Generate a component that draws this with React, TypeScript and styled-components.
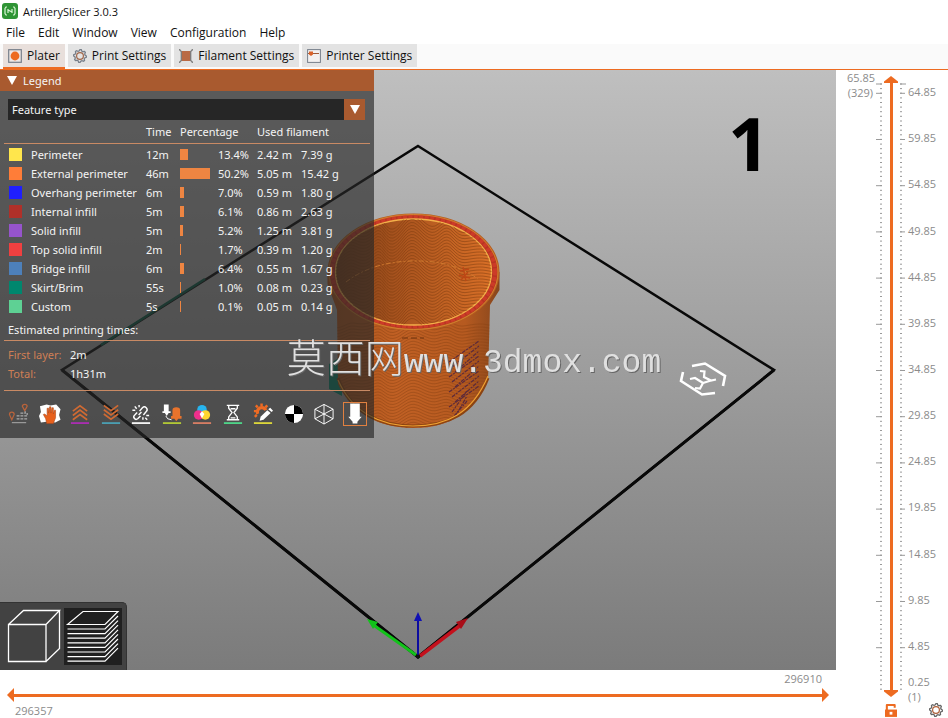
import React, { useState } from "react";
import styled, { createGlobalStyle, css } from "styled-components";

const ORANGE = "#ed6b21";
const PANEL_ORANGE = "#a95a2f";
const UI_FONT = `"Open Sans", "Noto Sans", sans-serif`;
const PANEL_FONT = `"Noto Sans", "Open Sans", sans-serif`;

const GlobalStyle = createGlobalStyle`
  * { box-sizing: border-box; }
  body { margin: 0; background: #fff; font-family: ${UI_FONT}; font-size: 12px; color: #111; }
  button, input, select { font: inherit; color: inherit; margin: 0; }
  button { border: 0; padding: 0; background: none; cursor: pointer; }
  svg { display: block; }
`;

const Window = styled.div`
  min-height: 100vh;
  display: grid;
  grid-template-rows: 22px 22px 26px 1fr;
`;

const TitleBar = styled.header`
  display: flex;
  align-items: center;
  gap: 5px;
  padding-left: 2px;
  font-size: 11px;
`;

const MenuBar = styled.nav`
  display: flex;
  align-items: center;
  gap: 13px;
  padding-left: 6px;
`;

const MenuItem = styled.button`
  line-height: 20px;
`;

const TabStrip = styled.div`
  display: flex;
  gap: 3px;
  padding-left: 3px;
  background: #fafafa;
  border-bottom: 1px solid ${ORANGE};
`;

const Tab = styled.button<{ $active: boolean }>`
  display: flex;
  align-items: center;
  gap: 5px;
  padding: 0 5px;
  background: ${(p) => (p.$active ? "#e8dfdb" : "#e3e3e3")};
  border-bottom: 2px solid ${(p) => (p.$active ? ORANGE : "#fafafa")};
`;

const Workspace = styled.main`
  display: grid;
  grid-template-columns: 1fr 112px;
`;

const Stage = styled.section`
  display: grid;
  grid-template-rows: 1fr 48px;
`;

const Viewport = styled.div`
  display: grid;
  overflow: hidden;
  background: linear-gradient(#bfbfbf, #7b7b7b);
  > * { grid-area: 1 / 1; }
`;

const Scene = styled.svg`
  width: 100%;
  height: 100%;
  min-height: 0;
  contain: size;
`;

const LegendPanel = styled.aside`
  place-self: start;
  width: 374px;
  z-index: 1;
  padding-bottom: 12px;
  background: rgba(40, 40, 40, 0.66);
  color: #f4f4f4;
  font-family: ${PANEL_FONT};
  font-size: 11px;
`;

const LegendTitle = styled.button`
  display: flex;
  align-items: center;
  gap: 6px;
  width: 100%;
  height: 21px;
  padding-left: 7px;
  background: ${PANEL_ORANGE};
`;

const Combo = styled.label`
  display: grid;
  grid-template-columns: 1fr 21px;
  height: 21px;
  margin: 8px 9px 1px 8px;
`;

const ComboSelect = styled.select`
  grid-area: 1 / 1 / 2 / 3;
  appearance: none;
  border: 0;
  border-radius: 0;
  padding: 0 4px;
  background: #262626;
`;

const ComboArrow = styled.span`
  grid-area: 1 / 2;
  display: grid;
  place-items: center;
  background: ${PANEL_ORANGE};
  pointer-events: none;
`;

const FeatureTable = styled.table`
  width: 366px;
  margin: 0 4px;
  table-layout: fixed;
  border-collapse: collapse;
  tbody::before { content: ""; display: table-row; height: 2px; }
  th, td { padding: 0; text-align: left; font-weight: 400; white-space: nowrap; }
  td { height: 19px; line-height: 18px; }
  thead th { height: 22px; border-bottom: 1px solid #c98a64; }
`;

const Col = styled.col<{ $w?: number }>`
  ${(p) => p.$w && css`width: ${p.$w}px;`}
`;

const Swatch = styled.span<{ $color: string }>`
  display: block;
  width: 13px;
  height: 13px;
  margin-left: 5px;
  background: ${(p) => p.$color};
`;

const Bar = styled.span`
  display: block;
  height: 11px;
  background: #ee8542;
`;

const SectionTitle = styled.h2`
  margin: 4px 4px 0;
  padding-left: 4px;
  height: 21px;
  line-height: 19px;
  font-size: 11px;
  font-weight: 400;
  border-bottom: 1px solid #c98a64;
`;

const Times = styled.dl`
  display: grid;
  grid-template-columns: 62px 1fr;
  grid-auto-rows: 19px;
  line-height: 19px;
  margin: 0 4px;
  padding: 4px 0 7px 4px;
  border-bottom: 1px solid #c98a64;
  dt { color: #cf7f55; }
  dd { margin: 0; }
`;

const ToolRow = styled.div`
  display: flex;
  justify-content: space-between;
  padding: 11px 7px 0 7px;
`;

const Tool = styled.button<{ $framed?: boolean }>`
  width: 24px;
  height: 24px;
  display: grid;
  place-items: center;
  border: ${(p) => (p.$framed ? "1px solid #e08040" : "0")};
`;

const ViewSwitch = styled.div`
  place-self: end start;
  z-index: 1;
  display: flex;
  gap: 1px;
  padding: 5px 4px 5px 5px;
  background: #424242;
  border-top: 1px solid #333;
  border-right: 1px solid #333;
  border-radius: 0 5px 0 0;
`;

const ViewButton = styled.button<{ $active: boolean }>`
  width: 58px;
  height: 57px;
  background: ${(p) => (p.$active ? "#202020" : "transparent")};
`;

const MoveBar = styled.div`
  display: grid;
  grid-template-rows: 18px 14px 16px;
  padding: 0 7px;
  color: #8b8b8b;
  font-size: 11px;
  line-height: 18px;
`;

const MoveEnd = styled.output`
  justify-self: end;
  padding-right: 7px;
`;

const MoveStart = styled.output`
  padding-left: 8px;
`;

const DoubleSlider = styled.div<{ $vertical?: boolean }>`
  display: grid;
  background: ${(p) =>
    p.$vertical
      ? `linear-gradient(${ORANGE}, ${ORANGE}) center / 3px calc(100% - 12px) no-repeat`
      : `linear-gradient(${ORANGE}, ${ORANGE}) center / calc(100% - 12px) 3px no-repeat`};
`;

const shapes = {
  left: "polygon(0 50%, 100% 0, 100% 100%)",
  right: "polygon(100% 50%, 0 0, 0 100%)",
  up: "polygon(50% 0, 100% 80%, 100% 100%, 0 100%, 0 80%)",
  down: "polygon(50% 100%, 100% 20%, 100% 0, 0 0, 0 20%)",
};

const Range = styled.input<{ $shape: keyof typeof shapes }>`
  grid-area: 1 / 1;
  appearance: none;
  background: transparent;
  width: 100%;
  height: 100%;
  min-width: 0;
  min-height: 0;
  pointer-events: none;
  ${(p) =>
    (p.$shape === "up" || p.$shape === "down") &&
    css`
      writing-mode: vertical-lr;
      direction: rtl;
    `}
  &::-webkit-slider-thumb {
    appearance: none;
    pointer-events: auto;
    width: ${(p) => (p.$shape === "up" || p.$shape === "down" ? 14 : 7)}px;
    height: ${(p) => (p.$shape === "up" || p.$shape === "down" ? 7 : 14)}px;
    background: ${ORANGE};
    clip-path: ${(p) => shapes[p.$shape]};
  }
`;

const LayerBar = styled.section`
  display: grid;
  grid-template-columns: 29px 30px 1fr;
  grid-template-rows: 1fr 48px;
  padding-left: 11px;
  color: #8b8b8b;
  font-size: 11px;
  line-height: 15px;
`;

const TopLayer = styled.output`
  grid-area: 1 / 1;
  text-align: right;
  padding-right: 3px;
`;

const LayerTrack = styled.div`
  grid-area: 1 / 2 / 3 / 3;
  display: grid;
  margin: 6px 0 21px;
  > * { grid-area: 1 / 1; }
`;

const Ticks = styled.svg`
  width: 30px;
  height: 100%;
  contain: size;
`;

const LayerLabels = styled.ol`
  grid-area: 1 / 3;
  display: flex;
  flex-direction: column;
  margin: 0;
  padding: 0 0 0 2px;
  list-style: none;
  li { flex: 1; display: flex; align-items: center; padding-bottom: 3px; }
`;

const BottomLayer = styled.output`
  grid-area: 2 / 3;
  padding: 4px 0 0 2px;
`;

const LockButton = styled.button`
  grid-area: 2 / 2;
  place-self: end center;
  z-index: 1;
  padding-bottom: 1px;
`;

const SettingsButton = styled.button`
  grid-area: 2 / 3;
  place-self: end end;
  padding: 0 5px 1px 0;
`;

const Watermark = styled.div`
  position: fixed;
  inset: 0;
  z-index: 5;
  display: grid;
  place-content: center;
  pointer-events: none;
  color: #e0e0e0;
  text-shadow: 1px 1px 0 #666;
  white-space: nowrap;
  font: 33px/44px "Liberation Mono", monospace;
`;

const WatermarkHan = styled.span`
  font: 300 39px/44px "Noto Sans CJK SC", sans-serif;
`;

/* ---------- icons ---------- */

const AppIcon = () => (
  <svg width="16" height="16" viewBox="0 0 16 16">
    <rect width="16" height="16" rx="3" fill="#2f9435" />
    <path d="M5 4H4L3 5.500V10.500L4 12H5M11 4H12L13 5.500V10.500L12 12H11M6 6V10M10 6V10M6 7L10 9" fill="none" stroke="#d8f5d4" strokeWidth="1.200" />
  </svg>
);

const PlaterIcon = () => (
  <svg width="14" height="14" viewBox="0 0 14 14">
    <rect x=".7" y=".7" width="12.600" height="12.600" fill="#eee7e4" stroke="#777f8a" strokeWidth="1.200" />
    <circle cx="7" cy="7" r="4.400" fill={ORANGE} />
  </svg>
);

const gearPath = (cx: number, cy: number, r: number) => {
  const pts: string[] = [];
  for (let i = 0; i < 32; i++) {
    const rr = i % 4 < 2 ? r : r - 1.3;
    const a = (i / 32) * Math.PI * 2;
    pts.push(`${(cx + rr * Math.cos(a)).toFixed(2)},${(cy + rr * Math.sin(a)).toFixed(2)}`);
  }
  return `M${pts.join("L")}Z`;
};

const GearIcon = ({ stroke, inner }: { stroke: string; inner: string }) => (
  <svg width="14" height="14" viewBox="0 0 14 14" fill="none">
    <path d={gearPath(7, 7, 6.4)} stroke={stroke} strokeWidth="1.300" />
    <circle cx="7" cy="7" r="3.400" stroke={inner} strokeWidth="1.200" />
  </svg>
);

const SpoolIcon = () => (
  <svg width="14" height="14" viewBox="0 0 14 14">
    <path d="M2 2H12V12H2Z" fill="#b96a45" />
    <path d="M.7 0V1L2.300 2.500V11.500L.7 13V14M13.300 0V1L11.700 2.500V11.500L13.300 13V14" fill="none" stroke="#7d7d7d" strokeWidth="1.300" />
  </svg>
);

const PrinterIcon = () => (
  <svg width="14" height="14" viewBox="0 0 14 14">
    <rect x=".6" y=".6" width="12.800" height="12.800" fill="#f3f1f0" stroke="#777f8a" />
    <path d="M1 4.500H12" stroke="#a05a38" />
    <path d="M2 2.500H6V5.500L4 7L2 5.500Z" fill="#d9622a" />
  </svg>
);

const Triangle = () => (
  <svg width="10" height="9" viewBox="0 0 10 9">
    <path d="M0 0H10L5 9Z" fill="#fff" />
  </svg>
);

const LockIcon = () => (
  <svg width="12" height="14" viewBox="0 0 13 15">
    <path d="M2 8V2H10.500V5" fill="none" stroke={ORANGE} strokeWidth="2.200" strokeLinejoin="round" />
    <path d="M0 7H13V15H0Z" fill={ORANGE} />
    <path d="M5 9.500H8V12.500H5Z" fill="#fff" />
  </svg>
);

const CubeIcon = () => (
  <svg width="58" height="57" viewBox="5 608 58 57" fill="none" stroke="#fff" strokeWidth="1.300">
    <path d="M8.500 624.500H46V661.500H8.500ZM8.500 624.500L23.500 610.500H59.500L46 624.500M59.500 610.500V648.500L46 661.500" />
  </svg>
);

const LayersIcon = () => (
  <svg width="58" height="57" viewBox="64 608 58 57" fill="none" stroke="#fff" strokeWidth="1.200">
    <path d="M67.500 624.500L83 611.500H118L105 624.500Z" />
    {[0, 1, 2, 3, 4, 5, 6, 7].map((i) => (
      <path key={i} d={`M67.500 ${629 + i * 4.6}H105L118 ${616 + i * 4.6}`} />
    ))}
  </svg>
);

const O = "#cf6a33";
const toolArt: Record<string, React.ReactNode> = {
  Travel: (
    <g fill="none" stroke="#b8633b" strokeWidth="1.300">
      <path d="M1.500 11.500Q1.500 9 4 9T6.500 11.500L4 17Z" />
      <path d="M15 3Q15 1 17.500 1T20 3L17.500 7.500Z" />
      <path d="M18 8V10H12M9 13H20V10M9 16H20" stroke="#aaa" strokeDasharray="3 1" />
      <path d="M4 20H19" stroke="#999" />
    </g>
  ),
  Wipe: (
    <g>
      <path d="M1 3L8 1L12 2L18 1L22.500 6L21 12L22.500 17L17 20L8 19L2 20L0 13L2 9Z" fill="#fff" />
      <path d="M8 21L7 16L4.500 11.500L6 11L8.500 13V5H10V10L11 3.500H12.500V10L13.500 4.500H15V11L16 7H17.300V15L15 21Z" fill="#e8601c" stroke="#a8481c" strokeWidth=".6" />
    </g>
  ),
  Retractions: (
    <g fill="none" strokeWidth="1.800">
      <path d="M4 8L11.500 2.500L19 8M4 12.500L11.500 7L19 12.500M4 17L11.500 11.500L19 17" stroke={O} />
      <path d="M2 20.500H21" stroke="#b02cb8" />
    </g>
  ),
  Deretractions: (
    <g fill="none" strokeWidth="1.800">
      <path d="M4 2L11.500 7.500L19 2M4 6.500L11.500 12L19 6.500M4 11L11.500 16.500L19 11" stroke={O} />
      <path d="M2 20.500H21" stroke="#4ba3b8" />
    </g>
  ),
  Seams: (
    <g fill="none" stroke="#fff" strokeWidth="1.500">
      <path d="M10 8L13 4.500Q15 2.500 17 4.500T17 8.500L14 12M12 9L9 12M11 13L8 16Q6 17.500 4.500 15.500T5 12L7.500 9.500M5 3L7 5.500M9.500 1.500V4M2.500 7H5.500M18 17L16 15M13.500 17V14.500M20 12.500H17" />
      <path d="M2 20.500H21" strokeWidth="1.800" />
    </g>
  ),
  "Tool changes": (
    <g>
      <path d="M3 1H8V8H10V10H8L6 13L4 10H1.500V8H3Z" fill="#fff" />
      <path d="M12 7Q12 4 16 4T20 7V13H21.500V16H18L16 18.500L14 16H10.500V13H12Z" fill="#e8732c" />
      <path d="M5 13Q6 17 11 17" fill="none" stroke="#fff" />
      <path d="M2 20.500H21" stroke="#b8cf35" strokeWidth="1.800" />
    </g>
  ),
  "Color changes": (
    <g>
      <circle cx="11.500" cy="6.500" r="5" fill="#27b4ee" />
      <circle cx="8" cy="12" r="5" fill="#ee2f8c" />
      <circle cx="15" cy="12" r="5" fill="#ffd52e" />
      <path d="M11.500 8L14 11L11.500 15.500L9 11Z" fill="#fff" />
      <path d="M2 20.500H21" stroke="#df8066" strokeWidth="1.800" />
    </g>
  ),
  "Print pauses": (
    <g fill="none" stroke="#fff" strokeWidth="1.400">
      <path d="M5 2H18M5 17H18M7 2V5L10.500 9.500L7 14V17M16 2V5L12.500 9.500L16 14V17M9 5.500H14M9 15H14" />
      <path d="M2 20.500H21" stroke="#4fdd8c" strokeWidth="1.800" />
    </g>
  ),
  "Custom G-codes": (
    <g>
      <path d="M14.500 7A4.500 4.500 0 1 0 6 11" fill="none" stroke="#ee6b24" strokeWidth="3.400" />
      <path d="M4 2L6 4M10 0V3M2 8H5M16 2L14 4M3 14L5 12" stroke="#ee6b24" strokeWidth="2.600" />
      <path d="M8 18L9 14L16 7L19.500 10L12 17Z" fill="#fff" />
      <path d="M17 6L19 4.500L22 7.500L20.500 9Z" fill="#fff" />
      <path d="M2 20.500H21" stroke="#e5df3a" strokeWidth="1.800" />
    </g>
  ),
  "Center of gravity": (
    <g>
      <circle cx="11.500" cy="11" r="9.500" fill="#fff" />
      <path d="M11.500 11V1.500A9.500 9.500 0 0 0 2 11ZM11.500 11V20.500A9.500 9.500 0 0 0 21 11Z" fill="#000" transform="matrix(-1 0 0 1 23 0)" />
    </g>
  ),
  Shells: (
    <path d="M11.500 1L21 6V16L11.500 21.500L2 16V6ZM2 6L11.500 11L21 6M11.500 11V21.500M2 16L11.500 11L21 16M11.500 1V11" fill="none" stroke="#fff" />
  ),
  "Tool marker": <path d="M6.500 0H16.500V14H18.500L14 19V21H9V19L4.500 14H6.500Z" fill="#fff" />,
};

/* ---------- 3D scene ---------- */

const grain = (top: number, count: number, step: number, amp: number) =>
  Array.from({ length: count }, (_, k) => {
    const pts: string[] = [];
    for (let x = 324; x <= 502; x += 3) {
      const bump = (c: number, w: number, h: number) => h * Math.exp(-Math.pow((x - c) / w, 2));
      const y =
        top + k * step - bump(411, 13, amp) - bump(379, 8, amp * 0.7) - bump(447, 10, amp * 0.8) -
        bump(350, 8, amp * 0.4) + 2 * Math.sin((x - 324) / 9);
      pts.push(`${x},${y.toFixed(1)}`);
    }
    return `M${pts.join("L")}`;
  }).join("");

const BODY = "M327.500 272V284L337 310L338 384C352 414 380 428 413 428S472 416 488 380L490 305L499.500 290V272Z";

const PrintScene = () => (
  <Scene viewBox="0 70 836 600" preserveAspectRatio="xMidYMid slice" role="img" aria-label="Sliced cup on print bed">
    <defs>
      <linearGradient id="outer">
        <stop offset="0" stopColor="#a9521c" />
        <stop offset=".4" stopColor="#c06024" />
        <stop offset=".8" stopColor="#b65a20" />
        <stop offset="1" stopColor="#87461c" />
      </linearGradient>
      <linearGradient id="inner">
        <stop offset="0" stopColor="#7d3f19" />
        <stop offset=".4" stopColor="#a8531e" />
        <stop offset="1" stopColor="#d86f27" />
      </linearGradient>
      <clipPath id="bodyClip"><path d={BODY} /></clipPath>
      <clipPath id="innerClip"><ellipse cx="413.500" cy="272" rx="78" ry="53" /></clipPath>
    </defs>
    <path d="M418 146L774 370L418 657L62 370Z" fill="none" stroke="#080808" strokeWidth="2.500" />
    <path d="M774 370L418 657L62 370" fill="none" stroke="#080808" strokeWidth="3" />
    <path d="M101 345L205 279" stroke="#0b5a45" strokeWidth="2.500" />
    <path d="M329 364L342 356V396L329 389Z" fill="#078066" />

    <path d={BODY} fill="url(#outer)" />
    <g clipPath="url(#bodyClip)">
      <path d={grain(326, 38, 3, 8)} fill="none" stroke="#8a4315" strokeWidth="1" opacity=".45" />
      <g stroke="#5b2a3c" strokeWidth="1.200" strokeDasharray="4 1 2 1">
        {Array.from({ length: 13 }, (_, i) => (
          <path key={i} d={`M${449 + (i % 3) * 3} ${362 + i * 5}L${479 - (i > 9 ? 12 : 0)} ${341 + i * 5}`} />
        ))}
      </g>
    </g>
    <path d="M338 378C350 411 378 426 413 426S474 414 488 378" fill="none" stroke="#8b4312" strokeWidth="3" />
    <path d="M338 380C352 412 380 426 413 426S472 414 488 376" fill="none" stroke="#f0a032" strokeWidth="1.200" />
    <ellipse cx="413.500" cy="272" rx="85" ry="57.500" fill="#b83423" stroke="#b65c20" strokeWidth="2" />
    <ellipse cx="413.500" cy="271.500" rx="81.500" ry="55" fill="none" stroke="#cc3b28" strokeWidth="4" strokeDasharray="4 1.500" />
    <ellipse cx="413.500" cy="272" rx="84.500" ry="57.500" fill="none" stroke="#d98b32" strokeWidth=".8" />
    <ellipse cx="413.500" cy="272" rx="78" ry="53" fill="url(#inner)" stroke="#f3b049" strokeWidth="1.400" />
    <g clipPath="url(#innerClip)">
      <path d={grain(230, 36, 3, 16)} fill="none" stroke="#7c3b10" opacity=".5" />
      <path d="M346 282Q372 262 412 261T478 279" fill="none" stroke="#cf7a30" strokeDasharray="5 2 2 2" />
      <path d="M460 271L469 269M459 275L470 278M463 267L466 281M468 272L461 280" stroke="#bd4715" strokeWidth="1.300" />
    </g>
    <path d="M402 338H424" stroke="#70340f" strokeDasharray="6 3" />

    <g fill="none" stroke="#fff" strokeWidth="2.600">
      <path d="M683 372L681 381L702 394.500L715 393" />
      <path d="M692 366L705 363.500L725 376L723 386" />
      <path d="M690 379L695 378L703 383L700 388.500L695 388" strokeWidth="2.200" />
      <path d="M700 371L704.500 371.500L704 377L711 380.500L716 379.500M703 383L711 380.500" strokeWidth="2.200" />
    </g>
    <text x="728" y="171" fontFamily="Noto Sans, Open Sans, sans-serif" fontWeight="700" fontSize="73" fill="#000">1</text>

    <path d="M416 655L372 624" stroke="#12c21a" strokeWidth="3" />
    <path d="M367 619L378 622L373 629Z" fill="#12c21a" />
    <path d="M420 656L462 624" stroke="#c4101c" strokeWidth="3.500" />
    <path d="M468 618L461 629L456 622Z" fill="#a80d18" />
    <path d="M418 656V620" stroke="#0c0ca0" strokeWidth="2" />
    <path d="M418 612L422 621H414Z" fill="#1010b4" />
    <circle cx="418" cy="656.500" r="2" fill="#111" />
  </Scene>
);

/* ---------- data ---------- */

const features = [
  ["Perimeter", "#ffe64c", "12m", 13.4, "2.42 m", "7.39 g"],
  ["External perimeter", "#ff7d38", "46m", 50.2, "5.05 m", "15.42 g"],
  ["Overhang perimeter", "#1f1fff", "6m", 7.0, "0.59 m", "1.80 g"],
  ["Internal infill", "#b03029", "5m", 6.1, "0.86 m", "2.63 g"],
  ["Solid infill", "#9654cc", "5m", 5.2, "1.25 m", "3.81 g"],
  ["Top solid infill", "#f04040", "2m", 1.7, "0.39 m", "1.20 g"],
  ["Bridge infill", "#4d80ba", "6m", 6.4, "0.55 m", "1.67 g"],
  ["Skirt/Brim", "#00876e", "55s", 1.0, "0.08 m", "0.23 g"],
  ["Custom", "#5ed194", "5s", 0.1, "0.05 m", "0.14 g"],
] as const;

const layerMarks = Array.from({ length: 13 }, (_, i) => (64.85 - i * 5).toFixed(2));

const tabs = [
  { name: "Plater", icon: <PlaterIcon /> },
  { name: "Print Settings", icon: <GearIcon stroke="#777f8a" inner="#a0664a" /> },
  { name: "Filament Settings", icon: <SpoolIcon /> },
  { name: "Printer Settings", icon: <PrinterIcon /> },
];

const tickPath = () => {
  let d = "M0 8H6M24 8H30";
  for (let y = 8; y < 616; y += 4.62) d += `M4 ${y.toFixed(1)}H6M24 ${y.toFixed(1)}H26`;
  for (let i = 0; i < 13; i++) {
    const y = (17.3 + i * 46.2).toFixed(1);
    d += `M0 ${y}H6M24 ${y}H29`;
  }
  return d;
};

const Legend = () => {
  const [open, setOpen] = useState(true);
  return (
    <LegendPanel>
      <LegendTitle onClick={() => setOpen(!open)}><Triangle />Legend</LegendTitle>
      {open && (
        <>
          <Combo>
            <ComboSelect aria-label="View type">
              <option>Feature type</option>
            </ComboSelect>
            <ComboArrow><Triangle /></ComboArrow>
          </Combo>
          <FeatureTable>
            <colgroup>
              <Col $w={27} /><Col $w={115} /><Col $w={34} /><Col $w={38} /><Col $w={39} /><Col $w={44} /><Col />
            </colgroup>
            <thead>
              <tr><th /><th /><th>Time</th><th colSpan={2}>Percentage</th><th colSpan={2}>Used filament</th></tr>
            </thead>
            <tbody>
              {features.map(([name, color, time, pct, len, weight]) => (
                <tr key={name}>
                  <td><Swatch $color={color} /></td>
                  <td>{name}</td>
                  <td>{time}</td>
                  <td><Bar style={{ width: Math.max(1, Math.round(pct * 0.6)) }} /></td>
                  <td>{pct.toFixed(1)}%</td>
                  <td>{len}</td>
                  <td>{weight}</td>
                </tr>
              ))}
            </tbody>
          </FeatureTable>
          <SectionTitle>Estimated printing times:</SectionTitle>
          <Times>
            <dt>First layer:</dt><dd>2m</dd>
            <dt>Total:</dt><dd>1h31m</dd>
          </Times>
          <ToolRow>
            {Object.entries(toolArt).map(([name, art]) => (
              <Tool key={name} aria-label={name} $framed={name === "Tool marker"}>
                <svg width="22" height="22" viewBox="0 0 23 22">{art}</svg>
              </Tool>
            ))}
          </ToolRow>
        </>
      )}
    </LegendPanel>
  );
};

export default function App() {
  const [tab, setTab] = useState("Plater");
  const [view, setView] = useState("preview");
  return (
    <Window>
      <GlobalStyle />
      <TitleBar><AppIcon />ArtillerySlicer 3.0.3</TitleBar>
      <MenuBar>
        {["File", "Edit", "Window", "View", "Configuration", "Help"].map((m) => <MenuItem key={m}>{m}</MenuItem>)}
      </MenuBar>
      <TabStrip role="tablist">
        {tabs.map((t) => (
          <Tab key={t.name} role="tab" aria-selected={tab === t.name} $active={tab === t.name} onClick={() => setTab(t.name)}>
            {t.icon}{t.name}
          </Tab>
        ))}
      </TabStrip>
      <Workspace>
        <Stage>
          <Viewport>
            <PrintScene />
            <Legend />
            <ViewSwitch>
              <ViewButton aria-label="3D editor view" $active={view === "editor"} onClick={() => setView("editor")}><CubeIcon /></ViewButton>
              <ViewButton aria-label="Preview" $active={view === "preview"} onClick={() => setView("preview")}><LayersIcon /></ViewButton>
            </ViewSwitch>
          </Viewport>
          <MoveBar>
            <MoveEnd>296910</MoveEnd>
            <DoubleSlider>
              <Range $shape="left" type="range" min={296357} max={296910} defaultValue={296357} aria-label="First move" />
              <Range $shape="right" type="range" min={296357} max={296910} defaultValue={296910} aria-label="Last move" />
            </DoubleSlider>
            <MoveStart>296357</MoveStart>
          </MoveBar>
        </Stage>
        <LayerBar>
          <TopLayer>65.85<br />(329)</TopLayer>
          <LayerTrack>
            <Ticks viewBox="0 0 30 621" preserveAspectRatio="none">
              <path d={tickPath()} stroke="#999" fill="none" />
            </Ticks>
            <DoubleSlider $vertical>
              <Range $shape="up" type="range" min={1} max={329} defaultValue={329} aria-label="Top layer" />
              <Range $shape="down" type="range" min={1} max={329} defaultValue={1} aria-label="Bottom layer" />
            </DoubleSlider>
          </LayerTrack>
          <LayerLabels>{layerMarks.map((m) => <li key={m}>{m}</li>)}</LayerLabels>
          <BottomLayer>0.25<br />(1)</BottomLayer>
          <LockButton aria-label="One layer lock"><LockIcon /></LockButton>
          <SettingsButton aria-label="Slider settings"><GearIcon stroke="#666" inner="#b0603a" /></SettingsButton>
        </LayerBar>
      </Workspace>
      <Watermark><div><WatermarkHan>莫西网</WatermarkHan>www.3dmox.com</div></Watermark>
    </Window>
  );
}
